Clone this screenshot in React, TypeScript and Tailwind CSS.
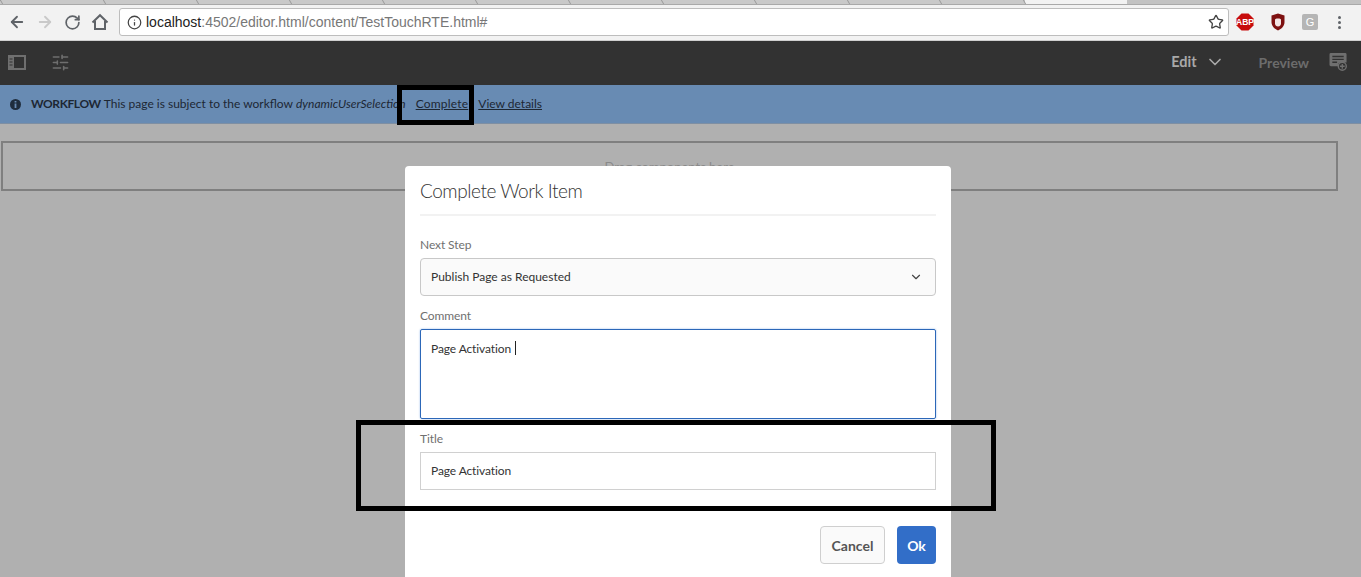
import { ArrowLeft, ArrowRight, RotateCw, Info, Star, ChevronDown, SlidersHorizontal } from "lucide-react";

const font = "font-['Lato','Open_Sans',sans-serif]";

function Tabs() {
  return (
    <div className="flex h-[5px] items-stretch overflow-hidden border-b border-[#a9a9a9] bg-[#c9c9c9]">
      {[2, 103, 93, 93, 93, 93, 93, 93, 93, 93, 92, 84].map((w, i) => (
        <div key={i} style={{ width: w }} className="skew-x-[30deg] border-r border-[#9a9a9a]" />
      ))}
      <div className="-mb-px w-[102px] bg-[#f2f2f2]" />
      <div className="flex-1 bg-[#c2c2c2]" />
    </div>
  );
}

function Toolbar() {
  return (
    <div className="flex h-[35px] items-center bg-[#f2f2f2] pb-[1px] font-['Liberation_Sans',sans-serif]">
      <div className="flex w-[119px] items-center gap-[10px] pl-[8px] text-[#5f6368]">
        <ArrowLeft size={18} strokeWidth={2.4} />
        <ArrowRight size={18} strokeWidth={2.4} className="text-[#c9c9c9]" />
        <RotateCw size={17} strokeWidth={2.4} />
        <svg width="18" height="18" viewBox="0 0 18 18" fill="none" stroke="currentColor" strokeWidth="2">
          <path d="M1.5 9.5 9 2.2l7.5 7.3" />
          <path d="M4 8v8h10V8" />
        </svg>
      </div>
      <div className="flex h-[28px] w-[1110px] items-center rounded-[3px] border border-[#bdbdbd] bg-white pl-[7px] pr-[4px]">
        <Info size={15} strokeWidth={2} className="text-[#444]" />
        <span className="ml-[4px] text-[14px] text-[#777]">
          <span className="text-[#222]">localhost</span>:4502/editor.html/content/TestTouchRTE.html#
        </span>
        <Star size={16} strokeWidth={2} className="ml-auto text-[#444]" />
      </div>
      <div className="flex items-center pl-[7px]">
        <svg width="18" height="18" viewBox="0 0 18 18">
          <polygon points="5.5,0.5 12.5,0.5 17.5,5.5 17.5,12.5 12.5,17.5 5.5,17.5 0.5,12.5 0.5,5.5" fill="#c70d0d" />
          <text x="9" y="12.2" textAnchor="middle" fontSize="8.5" fontWeight="700" fill="#fff" fontFamily="Liberation Sans">ABP</text>
        </svg>
        <svg width="16" height="18" viewBox="0 0 16 18" className="ml-[16px]">
          <path d="M8 0.5 L14.5 2.5 V9 C14.5 13 11.5 16 8 17.5 C4.5 16 1.5 13 1.5 9 V2.5 Z" fill="#7d1010" />
          <path d="M5 6.5 V10.5 C5 12.5 6.5 13.5 8 13.5 C10 13.5 11 12 11 10.5 V6.5 C11 5 5 5 5 6.5 Z" fill="#f3e3e3" />
        </svg>
        <div className="ml-[16px] flex h-[16px] w-[16px] items-center justify-center rounded-[2px] bg-[#b5b5b5] text-[11px] text-white">G</div>
        <div className="ml-[20px] flex flex-col gap-[2px]">
          <span className="h-[3px] w-[3px] rounded-full bg-[#5f6368]" />
          <span className="h-[3px] w-[3px] rounded-full bg-[#5f6368]" />
          <span className="h-[3px] w-[3px] rounded-full bg-[#5f6368]" />
        </div>
      </div>
    </div>
  );
}

function EditorBar() {
  return (
    <div className={`flex h-[45px] items-center border-t border-[#d0d0d0] bg-[#323232] pb-[2px] pl-[8px] pr-[13px] ${font}`}>
      <svg width="18" height="15" viewBox="0 0 18 15" className="text-[#6f6f6f]">
        <path fill="currentColor" d="M0 0h18v15H0z M6 2v11h10V2z" fillRule="evenodd" />
        <path fill="#323232" d="M1.5 3.5h3v1h-3z M1.5 6.5h3v1h-3z M1.5 9.5h3v1h-3z" />
      </svg>
      <SlidersHorizontal size={19} strokeWidth={2} className="ml-[25px] text-[#6f6f6f]" />
      <span className="ml-auto text-[14.5px] font-bold text-[#a9a9a9]">Edit</span>
      <ChevronDown size={20} strokeWidth={2} className="ml-[8px] text-[#a9a9a9]" />
      <span className="ml-[34px] text-[14px] font-bold text-[#6c6c6c]">Preview</span>
      <svg width="19" height="18" viewBox="0 0 19 19" className="ml-[20px] text-[#6f6f6f]">
        <path fill="currentColor" d="M1.5 0h15A1.5 1.5 0 0 1 18 1.5V10h-6a3 3 0 0 0-3 3v1H1.5A1.5 1.5 0 0 1 0 12.5v-11A1.5 1.5 0 0 1 1.5 0z" />
        <path fill="#323232" d="M3 3h12v1.5H3z M3 6h12v1.5H3z M3 9h5v1.5H3z" />
        <circle cx="13.5" cy="14" r="4.2" fill="none" stroke="currentColor" strokeWidth="1.5" />
        <path stroke="currentColor" strokeWidth="1.4" d="M13.5 11.5v5M11 14h5" />
      </svg>
    </div>
  );
}

function WorkflowBar() {
  return (
    <div className={`flex h-[39px] items-center border-b border-[#7e8fa3] bg-[#688bb3] pl-[10px] text-[12px] text-[#1d2733] ${font}`}>
      <svg width="11" height="11" viewBox="0 0 11 11">
        <circle cx="5.5" cy="5.5" r="5.5" fill="#1f2d3d" />
        <path fill="#688bb3" d="M4.6 2h1.8v1.6H4.6z M4.6 4.6h1.8V9H4.6z" />
      </svg>
      <span className="ml-[10px] font-bold tracking-[-0.4px]">WORKFLOW</span>
      <span className="ml-[3px]">This page is subject to the workflow</span>
      <span className="ml-[3px] italic">dynamicUserSelection</span>
      <span className="ml-[10px] tracking-[0.2px] underline">Complete</span>
      <span className="ml-[10px] underline">View details</span>
    </div>
  );
}

function Dialog() {
  return (
    <div className={`absolute left-[405px] top-[166px] h-[411px] w-[546px] rounded-t-[4px] bg-white px-[15px] ${font}`}>
      <div className="border-b-2 border-[#f2f2f2] pb-[10px] pt-[12px] text-[19px] font-light leading-[26px] tracking-[-0.45px] text-[#333]">Complete Work Item</div>
      <div className="mt-[21px] text-[12px] leading-[16px] tracking-[-0.1px] text-[#707070]">Next Step</div>
      <div className="mt-[5px] flex h-[38px] items-center justify-between rounded-[4px] border border-[#c8c8c8] bg-[#fafafa] pl-[10px] pr-[12px] text-[12px] text-[#333]">
        Publish Page as Requested
        <ChevronDown size={14} strokeWidth={2} className="text-[#444]" />
      </div>
      <div className="mt-[12px] text-[12px] leading-[16px] tracking-[-0.1px] text-[#707070]">Comment</div>
      <div className="mt-[5px] h-[90px] rounded-[2px] border border-[#2c67b8] pl-[10px] pt-[9px] text-[12px] leading-[16px] tracking-[-0.1px] text-[#333] shadow-[0_0_2px_#8fb4e6]">
        Page Activation <span className="ml-[1px] inline-block h-[14px] w-px translate-y-[2px] bg-[#222]" />
      </div>
      <div className="mt-[12px] text-[12px] leading-[16px] tracking-[-0.1px] text-[#707070]">Title</div>
      <div className="mt-[5px] flex h-[38px] items-center border border-[#d0d0d0] pl-[10px] text-[12px] tracking-[-0.1px] text-[#333]">Page Activation</div>
      <div className="mt-[36px] flex justify-end gap-[12px]">
        <button className="h-[38px] w-[65px] rounded-[4px] border border-[#cfcfcf] bg-[#fafafa] text-[14px] font-bold text-[#555]">Cancel</button>
        <button className="h-[38px] w-[39px] rounded-[4px] bg-[#326ec8] text-[14px] font-bold text-white">Ok</button>
      </div>
    </div>
  );
}

export default function App() {
  return (
    <div className="relative h-[577px] w-[1361px] overflow-hidden bg-[#b0b0b0]">
      <Tabs />
      <Toolbar />
      <EditorBar />
      <WorkflowBar />

      {/* drop zone behind the dialog */}
      <div className={`mx-[1px] mt-[17px] flex h-[50px] w-[1337px] justify-center border-2 border-[#7f7f7f] pt-[15px] text-[13px] text-[#8a8a8a] ${font}`}>
        Drag components here
      </div>

      <Dialog />

      {/* annotation boxes */}
      <div className="absolute left-[397px] top-[85px] h-[40px] w-[77px] border-[5px] border-black" />
      <div className="absolute left-[356px] top-[420px] h-[91px] w-[640px] border-[5px] border-black" />
    </div>
  );
}
